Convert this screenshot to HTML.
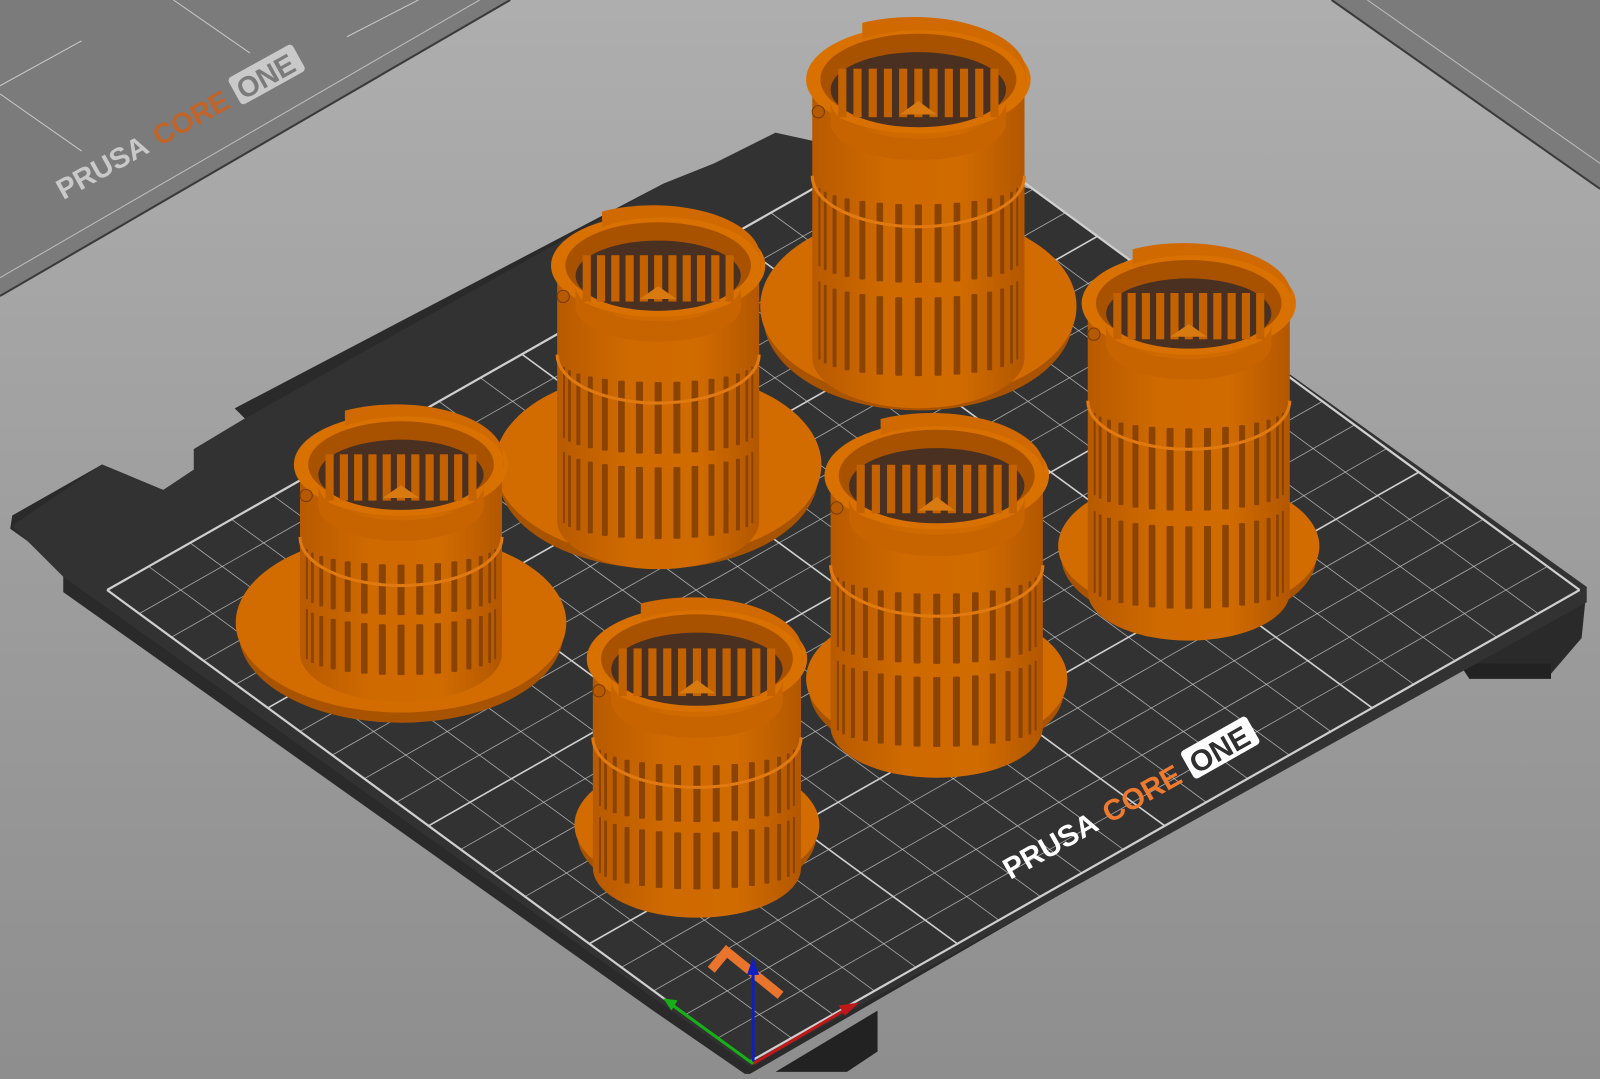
<!DOCTYPE html>
<html><head><meta charset="utf-8"><style>
html,body{margin:0;padding:0;width:1600px;height:1079px;overflow:hidden;background:#959595}
svg{display:block}
</style></head><body>
<svg id="s" width="1600" height="1079" viewBox="0 0 1568 1057" preserveAspectRatio="none" xmlns="http://www.w3.org/2000/svg">
<defs>
<linearGradient id="bg" x1="0" y1="0" x2="0" y2="1"><stop offset="0" stop-color="#aeaeae"/><stop offset="1" stop-color="#8e8e8e"/></linearGradient>
<linearGradient id="body" x1="0" y1="0" x2="1" y2="0"><stop offset="0" stop-color="#b85a00"/><stop offset=".35" stop-color="#cf6a00"/><stop offset=".7" stop-color="#d06b00"/><stop offset="1" stop-color="#b35700"/></linearGradient>
</defs>
<rect width="1568" height="1057" fill="url(#bg)"/>
<polygon points="0,0 500,0 0,290" fill="#7b7b7b"/>
<line x1="0" y1="290" x2="500" y2="0" stroke="#3a3a3a" stroke-width="2"/>
<line x1="0" y1="272" x2="470" y2="0" stroke="#bdbdbd" stroke-width="1"/>
<line x1="0" y1="84" x2="80" y2="40" stroke="#c8c8c8" stroke-width="1"/>
<line x1="0" y1="92" x2="80" y2="148" stroke="#c8c8c8" stroke-width="1"/>
<line x1="170" y1="0" x2="245" y2="52" stroke="#c8c8c8" stroke-width="1"/>
<line x1="340" y1="36" x2="410" y2="0" stroke="#c8c8c8" stroke-width="1"/>
<polygon points="1305,0 1568,0 1568,185" fill="#7b7b7b"/>
<line x1="1305" y1="0" x2="1568" y2="185" stroke="#3a3a3a" stroke-width="2"/>
<line x1="1340" y1="0" x2="1568" y2="160" stroke="#bdbdbd" stroke-width="1"/>
<g transform="translate(62,196) rotate(-29)" font-family="Liberation Sans, sans-serif" font-weight="bold" font-size="28">
<text x="0" y="0" fill="#c9c9c9">PRUSA</text><text x="108" y="0" fill="#c0642a">CORE</text>
<rect x="198" y="-26" width="72" height="30" rx="4" fill="#c9c9c9"/><text x="202" y="0" fill="#7b7b7b">ONE</text>
</g>
<!-- bed -->
<polygon points="700,160 760,130 1010,185 1555,575 1550,625 1520,660 1440,660 1430,650 735,1052 730,1052 640,990 62,580 62,555 10,518 12,505 100,455 160,480 190,460 190,440 240,410 230,400 650,180" fill="#2a2a2a"/>
<polygon points="1430,650 1520,650 1520,665 1440,665" fill="#222"/>
<polygon points="860,990 860,1030 830,1050 760,1050" fill="#222"/>
<polygon points="700,160 760,130 1010,185 1555,575 1555,590 735,1045 62,565 12,515 100,455 160,480 190,460 190,440 240,410 650,180" fill="#323232"/>
<g id="grid" stroke="#cfcfcf" fill="none"></g>
<g id="objs"></g>
<g transform="translate(990,862) rotate(-29.5)" font-family="Liberation Sans, sans-serif" font-weight="bold" font-size="29">
<text x="0" y="0" fill="#fff">PRUSA</text><text x="112" y="0" fill="#ee7a30">CORE</text>
<rect x="206" y="-27" width="74" height="31" rx="4" fill="#fff"/><text x="210" y="0" fill="#2f2f2f">ONE</text>
</g>
<!-- origin marker & axes -->
<polyline points="697,950 712,932 765,975" fill="none" stroke="#e8742e" stroke-width="9"/>
<line x1="738" y1="1042" x2="738" y2="948" stroke="#1020c0" stroke-width="3"/>
<polygon points="732,955 744,955 738,938" fill="#1020c0"/>
<line x1="738" y1="1042" x2="832" y2="987" stroke="#c01818" stroke-width="3"/>
<polygon points="822,985 828,995 842,982" fill="#c01818"/>
<line x1="738" y1="1042" x2="658" y2="984" stroke="#18b018" stroke-width="3"/>
<polygon points="664,980 658,990 650,978" fill="#18b018"/>
</svg>
<script>
var NS="http://www.w3.org/2000/svg";
function el(p,t,a){var e=document.createElementNS(NS,t);for(var k in a)e.setAttribute(k,a[k]);p.appendChild(e);return e;}
var g=document.getElementById('grid');
var L=[105,578],B=[735,1040],R=[1548,578],T=[918,116];
function lerp(a,b,t){return [a[0]+(b[0]-a[0])*t,a[1]+(b[1]-a[1])*t];}
var N=20;
for(var i=0;i<=N;i++){
 var t=i/N, w=(i%5==0)?(i==0||i==N?2.2:1.6):0.8, op=(i%5==0)?1:0.75;
 var a=lerp(L,B,t),b=lerp(T,R,t);
 el(g,'line',{x1:a[0],y1:a[1],x2:b[0],y2:b[1],'stroke-width':w,opacity:op});
 a=lerp(L,T,t);b=lerp(B,R,t);
 el(g,'line',{x1:a[0],y1:a[1],x2:b[0],y2:b[1],'stroke-width':w,opacity:op});
}
var o=document.getElementById('objs');
var cyl=[
 [900,62,350,110,300,155,92],
 [645,245,510,105,455,160,92],
 [1165,282,580,105,535,128,68],
 [393,440,640,105,610,162,88],
 [918,450,712,110,665,128,70],
 [683,630,850,108,808,120,64]
];
cyl.forEach(function(c){
 var cx=c[0],ty=c[1],by=c[2],r=c[3],ry=r*0.48;
 el(o,'ellipse',{cx:cx,cy:c[4]+10,rx:c[5]-3,ry:c[6],fill:'#a85300'});
 el(o,'ellipse',{cx:cx,cy:c[4],rx:c[5],ry:c[6],fill:'#d26c00'});
 var rb=r-6;
 el(o,'path',{d:'M'+(cx-rb)+','+(ty+ry*0.3)+' L'+(cx-rb)+','+by+' A'+rb+','+(rb*0.48)+' 0 0 0 '+(cx+rb)+','+by+' L'+(cx+rb)+','+(ty+ry*0.3)+' Z',fill:'url(#body)'});
 var h=by-ty-ry*0.9, y0=ty+ry*1.1+h*0.25;
 for(var k=-7;k<=7;k++){
  var ang=k/8*Math.PI/2, x=cx+Math.sin(ang)*rb*0.95, sw=Math.max(2,7*Math.cos(ang));
  var yo=Math.cos(ang)*rb*0.48;
  for(var row=0;row<2;row++){
   var ys=y0+yo*0.4+row*(h*0.38), hh=h*0.32;
   el(o,'rect',{x:x-sw/2,y:ys,width:sw,height:hh,fill:'#8a4300',rx:1});
  }
 }
 el(o,'path',{d:'M'+(cx-rb)+','+(y0-8)+' A'+rb+','+(rb*0.48)+' 0 0 0 '+(cx+rb)+','+(y0-8),fill:'none',stroke:'#e07a10','stroke-width':3});
 el(o,'ellipse',{cx:cx,cy:ty+ry*0.3,rx:r,ry:ry,fill:'#d87100'});
 el(o,'ellipse',{cx:cx,cy:ty+ry*0.3,rx:r-14,ry:ry-8,fill:'#a85200'});
 el(o,'ellipse',{cx:cx,cy:ty+ry*0.3+10,rx:r-24,ry:ry-16,fill:'#4a3020'});
 for(var k=-5;k<=5;k++){
  var x=cx+k*(r-28)/5.5;
  el(o,'rect',{x:x-4,y:ty+ry*0.3-ry*0.2,width:8,height:ry*0.9,fill:'#c46200'});
 }
 el(o,'path',{d:'M'+(cx-r+24)+','+(ty+ry*0.7)+' A'+(r-24)+','+(ry-16)+' 0 0 0 '+(cx+r-24)+','+(ty+ry*0.7)+' L'+(cx+r-24)+','+(ty+ry*1.1)+' A'+(r-24)+','+(ry-16)+' 0 0 1 '+(cx-r+24)+','+(ty+ry*1.1)+' Z',fill:'#c86400'});
 el(o,'path',{d:'M'+(cx-18)+','+(ty+ry*0.95)+' L'+cx+','+(ty+ry*0.7)+' L'+(cx+18)+','+(ty+ry*0.95)+' Z',fill:'#d87a10'});
 el(o,'path',{d:'M'+(cx-55)+','+(ty-ry*0.45)+' L'+(cx-55)+','+(ty-ry*0.75)+' A'+r+','+ry+' 0 0 1 '+(cx+r-5)+','+(ty+ry*0.1)+' L'+(cx+r-5)+','+(ty+ry*0.4)+' A'+(r-8)+','+(ry-4)+' 0 0 0 '+(cx-55)+','+(ty-ry*0.45)+' Z',fill:'#cf6900'});
 el(o,'circle',{cx:cx-r+12,cy:ty+ry*0.9,r:6,fill:'#b55a00',stroke:'#7a3a00','stroke-width':1});
});
</script>
</body></html>
